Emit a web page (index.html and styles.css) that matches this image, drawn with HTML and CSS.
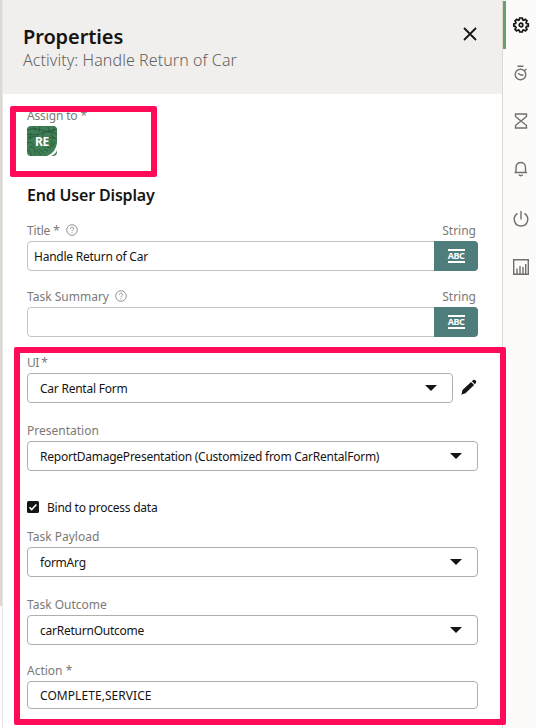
FILE: index.html
```html
<!DOCTYPE html>
<html lang="en">
<head>
<meta charset="utf-8">
<title>Properties</title>
<link rel="stylesheet" href="styles.css">
</head>
<body>
<div class="app">
  <div class="edge"></div>
  <main class="panel">
    <header class="header">
      <div class="heading">
        <h1>Properties</h1>
        <p>Activity: Handle Return of Car</p>
      </div>
      <svg class="close" viewBox="0 0 16 16"><path d="M2 2l12 12M14 2L2 14"/></svg>
    </header>
    <div class="content">
      <div class="assign">
        <div class="label"><span class="l-assign">Assign to *</span></div>
        <div class="avatar">
          <svg viewBox="0 0 30 30"><rect width="30" height="30" fill="#3f7f56"/><path class="texture" d="M0 4q8-3 14 0t16-1M0 8q9 2 15-1t15 1M1 12q6-3 11 0M18 12q7-2 12 1M0 17q5-2 7 3M2 21q6-1 6 6M0 24q4 0 4 6M6 1l3 4M13 0l-1 6M21 1l2 6M27 0l-1 6M4 7l-1 7M10 8l1 5M17 6l-2 6M24 8l3 5M9 24l5 5M12 23l5 4M17 23l4 2M20 21l4 1M25 14l-1 6M28 16l-3 5"/><path d="M30 17Q29 26 20 30h4q5-2 6-6z" fill="#fff"/></svg>
          <span>RE</span>
        </div>
      </div>
      <h2>End User Display</h2>

      <div class="field">
        <div class="label"><span class="l-title">Title *</span><svg class="help" viewBox="0 0 12 12"><circle cx="6" cy="6" r="5.3"/><path d="M4.4 4.8C4.4 2.6 7.7 2.7 7.6 4.7C7.5 5.8 6 5.8 6 7.2M6 8.2v1"/></svg><span class="type">String</span></div>
        <div class="control typed"><span class="value">Handle Return of Car</span><div class="abc"><b>ABC</b></div></div>
      </div>
      <div class="field">
        <div class="label"><span>Task Summary</span><svg class="help" viewBox="0 0 12 12"><circle cx="6" cy="6" r="5.3"/><path d="M4.4 4.8C4.4 2.6 7.7 2.7 7.6 4.7C7.5 5.8 6 5.8 6 7.2M6 8.2v1"/></svg><span class="type">String</span></div>
        <div class="control typed"><span></span><div class="abc"><b>ABC</b></div></div>
      </div>
      <div class="field">
        <div class="label"><span class="l-ui">UI *</span></div>
        <div class="row">
          <div class="control"><span class="value">Car Rental Form</span><i class="caret"></i></div>
          <svg class="pencil" viewBox="0 0 16 16"><path d="M.5 15.500l1-4.500 8.600-8 3 3-8.600 8.200zM10.900 2.300l1.200-1.200q1-.8 1.900 0l.9.9q.9 1 0 2l-1.100 1.200z"/><path class="shine" d="M1.500 14.500l-1 1"/></svg>
        </div>
      </div>
      <div class="field wide">
        <div class="label"><span>Presentation</span></div>
        <div class="control"><span class="value">ReportDamagePresentation (Customized from CarRentalForm)</span><i class="caret"></i></div>
      </div>
      <div class="check"><svg viewBox="0 0 12 12"><rect width="12" height="12" rx="1.5"/><path d="M2.500 6.300l2.200 2.200 4.700-5"/></svg><span class="value">Bind to process data</span></div>
      <div class="field payload">
        <div class="label"><span>Task Payload</span></div>
        <div class="control"><span class="value">formArg</span><i class="caret"></i></div>
      </div>
      <div class="field wide">
        <div class="label"><span>Task Outcome</span></div>
        <div class="control"><span class="value">carReturnOutcome</span><i class="caret"></i></div>
      </div>
      <div class="field">
        <div class="label"><span>Action *</span></div>
        <div class="control short"><span class="codes">COMPLETE,SERVICE</span></div>
      </div>
    </div>
  </main>
  <nav class="rail">
    <div class="tab active"><svg viewBox="0 0 16 16"><path d="M6.700 1h2.600l.4 1.800 1.100.5 1.600-1 1.600 1.600-1 1.600.5 1.100 1.800.4v2.200l-1.800.4-.5 1.100 1 1.600-1.600 1.600-1.600-1-1.100.5L9.300 15H6.700l-.4-1.600-1.100-.5-1.600 1L2 12.300l1-1.600-.5-1.100L.8 9.200V7l1.700-.4.5-1.100-1-1.600 1.600-1.600 1.600 1 1.100-.5z"/><circle cx="8" cy="8" r="1.800"/></svg></div>
    <div class="tab"><svg viewBox="0 0 16 16"><circle cx="7.500" cy="9.500" r="5.300"/><path d="M4.500 1.200h6M11.500 5.500l2-1.500M5 8.300l3 1.700h2.500"/></svg></div>
    <div class="tab"><svg viewBox="0 0 16 16"><path d="M2.500 1h11v2.500L8 8 2.500 3.500zM8 8l5.500 4.500V15h-11v-2.500z"/></svg></div>
    <div class="tab"><svg viewBox="0 0 16 16"><path d="M1.500 11.500h12.500M3 11.500V6.500C3 -.2 12.500-.2 12.500 6.500v5M5.800 13.800q2 1.800 4 0"/></svg></div>
    <div class="tab power"><svg viewBox="0 0 16 16"><path d="M8 0v8.500M4.500 2.400C-1.300 6.700 1.200 15 8 15s9.300-8.300 3.500-12.600"/></svg></div>
    <div class="tab"><svg viewBox="0 0 16 16"><path d="M.700.700h14.600v14.600H.700zM4 15V9.500M7 15V7M10 15V8M12.700 15V5"/></svg></div>
  </nav>
  <div class="mark mark-assign"></div>
  <div class="mark mark-form"></div>
</div>
</body>
</html>
```
FILE: styles.css
```css
* { box-sizing: border-box; }
body {
  margin: 0;
  font-family: "Noto Sans", sans-serif;
  font-size: 12px;
  color: #161513;
}
h1, h2, p { margin: 0; }
span { white-space: nowrap; }
.app {
  position: relative;
  display: flex;
  width: 536px;
  height: 728px;
  overflow: hidden;
  background: #fff;
}
.edge {
  width: 3px;
  border-right: 1px solid #e9e7e4;
  background: linear-gradient(#dcd8d4 606px, #fff 606px);
}
.panel { width: 499px; }
.header {
  display: flex;
  justify-content: space-between;
  height: 94px;
  padding: 24px 24px 0 20px;
  background: #f0efed;
}
.header h1 { font-size: 20px; line-height: 25px; font-weight: 600; letter-spacing: -.1px; }
.header p { font-size: 16px; line-height: 23px; font-weight: 300; letter-spacing: .08px; color: #64625f; white-space: nowrap; }
.close { width: 16px; height: 16px; margin-top: 2px; fill: none; stroke: #161513; stroke-width: 1.8; }
.content { padding: 10px 24px 0; }
.label { display: flex; align-items: center; height: 22px; color: #7b7976; }
.l-assign, .l-title { letter-spacing: -.15px; }
.l-ui { letter-spacing: -.6px; }
.value { letter-spacing: -.24px; }
.codes { letter-spacing: .06px; }
.avatar {
  display: grid;
  place-items: center;
  width: 30px;
  height: 30px;
  border-radius: 4px;
  overflow: hidden;
  color: #fff;
  font-weight: 700;
  letter-spacing: -.2px;
}
.avatar > * { grid-area: 1 / 1; }
.avatar svg { width: 30px; height: 30px; }
.texture { fill: none; stroke: #28533a; stroke-width: .8; }
h2 { height: 24px; margin: 27px 0 12px; font-size: 16px; line-height: 24px; font-weight: 600; letter-spacing: -.18px; white-space: nowrap; }
.field { margin-bottom: 14px; }
.field:has(+ .wide), .field.payload { margin-bottom: 16px; }
.help { width: 12px; height: 12px; margin-left: 6px; fill: none; stroke: #7b7976; stroke-width: .8; }
.type { margin: 0 2px 0 auto; }
.control {
  display: flex;
  flex: 1;
  align-items: center;
  justify-content: space-between;
  height: 30px;
  padding: 0 15px 0 12px;
  border: 1px solid #b1afac;
  border-radius: 4px;
}
.control.typed { padding: 0 0 0 6px; border-color: #c6c4c1; }
.control.short { height: 28px; }
.abc {
  display: grid;
  place-items: center;
  width: 44px;
  height: 30px;
  margin-right: -1px;
  border-radius: 0 4px 4px 0;
  background: #4f7d7b;
}
.abc b {
  display: flex;
  justify-content: center;
  height: 14px;
  width: 17px;
  border: solid #fff;
  border-width: 2px 0;
  color: #fff;
  font-size: 9px;
  font-weight: 700;
  letter-spacing: -.5px;
  line-height: 10px;
}
.row { display: flex; align-items: center; gap: 8px; }
.caret { border: solid transparent; border-width: 6px 6px 0; border-top-color: #161513; }
.pencil { width: 16px; height: 16px; margin-right: 1px; margin-top: -3px; fill: #161513; overflow: visible; }
.shine { stroke: #161513; stroke-width: .5; }
.check { display: flex; align-items: center; gap: 8px; height: 28px; margin: 22px 0 4px; }
.check svg { width: 12px; height: 12px; fill: #161513; }
.check path { fill: none; stroke: #fff; stroke-width: 1.6; }
.rail { width: 34px; padding-top: 1px; border-left: 1px solid #dcd9d5; background: #fcfbfa; }
.tab { display: flex; align-items: center; justify-content: center; height: 48px; padding-left: 3px; }
.tab.active { border-left: 3px solid #68a168; padding-left: 0; }
.tab.power { margin-top: 2px; }
.tab svg { width: 16px; height: 16px; fill: none; stroke: #716f6b; stroke-width: 1.4; overflow: visible; }
.tab.active svg { stroke: #161513; stroke-width: 1.7; }
.mark { position: absolute; border: 6px solid #ff0b57; border-radius: 2px; }
.mark-assign { left: 10px; top: 106px; width: 147px; height: 71px; }
.mark-form { left: 14px; top: 347px; width: 492px; height: 378px; }
```
